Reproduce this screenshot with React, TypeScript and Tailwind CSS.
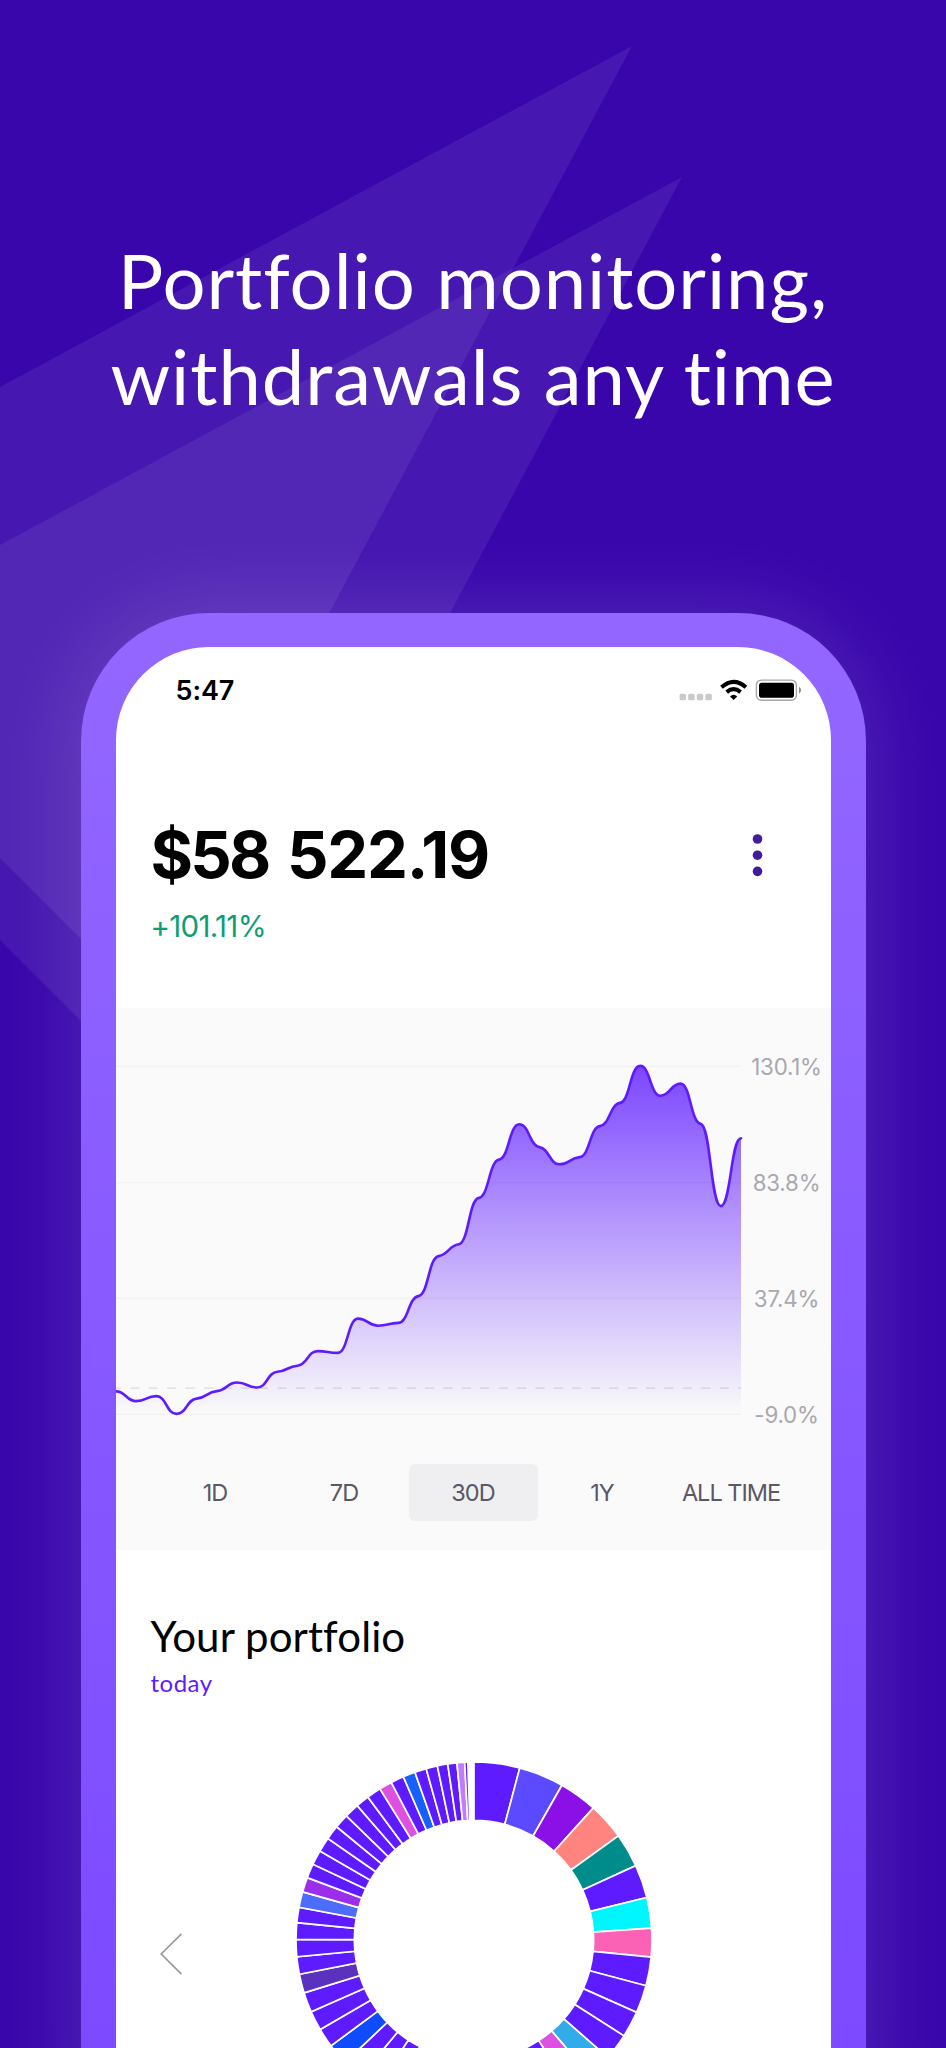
import clsx from "clsx";

const STEP = 625 / 31;
const values = [
  383.4, 393.1, 388.1, 405.9, 390.6, 383.1, 374.5, 379.5, 363.8, 357.7, 343.1, 344.9, 310.6, 317.7, 314.9, 288.1,
  248.1, 236.3, 189.9, 151.6, 116.3, 139.1, 156.3, 149.1, 118.1, 94.9, 57.9, 87.7, 75.6, 115.9, 198.1, 130.2,
];

// control points lie almost level with the day's value, so every day gets a short plateau
const linePath = () => {
  const slope = (i: number) => {
    if (i === 0 || i === values.length - 1) return 0;
    const a = values[i] - values[i - 1];
    const b = values[i + 1] - values[i];
    return a * b > 0 ? Math.sign(a) * Math.min(Math.abs(a), Math.abs(b), 12) * 0.12 : 0;
  };
  let d = `M0 ${values[0]}`;
  for (let i = 1; i < values.length; i++) {
    const x0 = (i - 1) * STEP;
    const x1 = i * STEP;
    d += ` C${x0 + STEP * 0.5} ${values[i - 1] + slope(i - 1)} ${x1 - STEP * 0.5} ${values[i] - slope(i)} ${x1} ${values[i]}`;
  }
  return d;
};

const labels = ["130.1%", "83.8%", "37.4%", "-9.0%"];
const ranges = ["1D", "7D", "30D", "1Y", "ALL TIME"];

const MAIN = "#5e1bff";

// [end angle in degrees clockwise from the top, colour]
const slices: [number, string][] = [
  [14.9, MAIN], [29.6, "#5b4aff"], [42.1, "#8b10e8"], [54.2, "#ff8480"], [65.3, "#008c8a"], [76.2, MAIN],
  [86.2, "#00f6ff"], [95.5, "#fb62b5"], [104.9, MAIN], [114, MAIN], [122.6, MAIN], [131.3, MAIN],
  [139.5, "#32ace8"], [147.3, "#dc50e2"], [155, MAIN], [162.5, MAIN], [170, MAIN], [177.5, MAIN],
  [185, MAIN], [192.5, MAIN], [200, MAIN], [207, MAIN], [213.3, MAIN], [219.7, MAIN], [226.5, MAIN],
  [233.5, "#0f4cff"], [239.8, MAIN], [246.2, MAIN], [252.7, MAIN], [258.9, "#5b32bf"], [264.6, MAIN],
  [270.2, MAIN], [275.6, MAIN], [280.6, MAIN], [285.7, "#4d6cf9"], [290.5, "#9b2eea"], [295.2, MAIN],
  [300, MAIN], [304.8, MAIN], [309.5, MAIN], [314.2, MAIN], [319, MAIN], [323.4, MAIN], [328.1, MAIN],
  [332.3, "#dc50e2"], [336.6, MAIN], [340.6, "#1760ff"], [344.4, MAIN], [348.1, MAIN], [351.5, MAIN],
  [354.5, MAIN], [357, "#c07cff"], [358, MAIN],
];

const slicePath = (from: number, to: number) => {
  const R = 178;
  const r = 119.6;
  const point = (deg: number, radius: number) => {
    const a = (deg * Math.PI) / 180;
    return `${178 + radius * Math.sin(a)} ${178 - radius * Math.cos(a)}`;
  };
  return `M${point(from, R)} A${R} ${R} 0 0 1 ${point(to, R)} L${point(to, r)} A${r} ${r} 0 0 0 ${point(from, r)} Z`;
};

const Backdrop = () => (
  <svg className="absolute left-0 top-0" width="946" height="1140" viewBox="0 0 946 1140" fill="#fff" fillOpacity="0.07">
    <path d="M632 46 L0 387 V858 L132 990 L330 611.5 Z" />
    <path d="M682 177 L0 545 V940 L180 1120 L451 611.5 Z" />
  </svg>
);

const StatusBar = () => (
  <div className="flex h-[86px] items-center justify-between pl-[60px] pr-[30px]">
    <p className="mt-0.5 font-[Inter,sans-serif] text-[27px] font-semibold leading-8 tracking-[-0.1px]">5:47</p>
    <svg className="-mt-px" width="123" height="24" viewBox="678 677.5 123 24">
      {[679.6, 688.2, 696.8, 705.4].map((x) => (
        <rect key={x} x={x} y="693.3" width="6.4" height="6.4" rx="1.5" fill="#cacaca" />
      ))}
      <g fill="none" stroke="#000" strokeWidth="4.1">
        <path d="M721.5 686.7 Q733.6 675.9 745.9 686.7" />
        <path d="M726.7 691.6 Q733.6 685.8 740.6 691.6" />
      </g>
      <path d="M733.6 699.6 L730 696 Q733.6 692.6 737.2 696 Z" />
      <rect x="756.4" y="679.6" width="40" height="20.2" rx="5" fill="none" stroke="#a6a6a6" strokeWidth="1.4" />
      <rect x="759" y="682.2" width="35" height="15" rx="2.8" />
      <path d="M799 686.5 Q801.2 687.6 801 689.8 Q801 692.4 799 693.3 Z" fill="#8f8f8f" />
    </svg>
  </div>
);

const Balance = () => (
  <div className="flex h-[275px] items-start justify-between pl-[35px] pr-[68px] pt-[82px] font-[Inter,sans-serif]">
    <div>
      <p className="text-[65px] font-bold leading-[80px] tracking-[-1.3px]">
        <span className="tracking-[-2.8px] [word-spacing:6px]">$58 </span>522.19
      </p>
      <p className="mt-[13px] text-[29.5px] leading-9 tracking-[-0.7px] text-[#0f9d75]">+101.11%</p>
    </div>
    <svg className="mt-[19px]" width="11" height="44" viewBox="0 0 11 44" fill="#451b9b">
      <circle cx="5.5" cy="5" r="4.8" />
      <circle cx="5.5" cy="21.2" r="4.8" />
      <circle cx="5.5" cy="37.4" r="4.8" />
    </svg>
  </div>
);

const Chart = () => {
  const line = linePath();
  return (
    <div className="h-[541.5px] bg-[#fafafa] font-[Inter,sans-serif]">
      <div className="flex h-[455.5px]">
        <svg className="shrink-0 overflow-visible" width="625" height="420" viewBox="0 0 625 420">
          <defs>
            <linearGradient id="area" gradientUnits="userSpaceOnUse" x1="0" y1="57" x2="0" y2="406">
              <stop offset="0" stopColor="#7c46ff" />
              <stop offset="1" stopColor="#7c46ff" stopOpacity="0" />
            </linearGradient>
          </defs>
          <path d={`${line} V406.3 H0 Z`} fill="url(#area)" />
          {[58.4, 174.6, 290.4, 406.3].map((y) => (
            <path key={y} d={`M0 ${y} H625`} stroke="#000" strokeOpacity="0.035" strokeWidth="1.4" />
          ))}
          <path d="M-4.2 380.2 H625" stroke="#000" strokeOpacity="0.12" strokeWidth="1.3" strokeDasharray="9.2 9.22" />
          <path d={line} fill="none" stroke={MAIN} strokeWidth="2.6" strokeLinecap="round" />
        </svg>
        <div className="flex w-[90px] flex-col items-center gap-[86px] pl-0.5 pt-[43.5px] text-[22.3px] leading-[30px] tracking-[-0.2px] text-[#a9a7b0]">
          {labels.map((l) => (
            <span key={l}>{l}</span>
          ))}
        </div>
      </div>
      <div className="flex px-[35px]">
        {ranges.map((r) => (
          <button
            key={r}
            className={clsx(
              "h-[57.5px] w-[129px] whitespace-nowrap rounded-md text-[23.5px] tracking-[-1px] text-[#5a5766]",
              r === "30D" && "bg-[#efeff1]"
            )}
          >
            {r}
          </button>
        ))}
      </div>
    </div>
  );
};

const Portfolio = () => (
  <div className="pt-[61px] font-[Lato,sans-serif]">
    <h2 className="pl-[35px] text-[42px] leading-[50px] tracking-[0.1px]">Your portfolio</h2>
    <p className="mt-[7px] pl-[35px] text-[24px] leading-[30px] tracking-[0.5px] text-[#5e1bff]">today</p>
    <div className="flex pl-11 pt-16">
      <svg className="mt-[171px] shrink-0" width="22" height="43" viewBox="0 0 22 43">
        <path d="M21.4 0.8 L1.2 21 L21.4 41.2" fill="none" stroke="#999" strokeWidth="1.7" />
      </svg>
      <svg className="ml-[114px] shrink-0" width="356" height="356" viewBox="0 0 356 356">
        {slices.map(([end, color], i) => (
          <path
            key={end}
            d={slicePath(i ? slices[i - 1][0] : 0, end)}
            fill={color}
            stroke="#fff"
            strokeWidth="1.7"
          />
        ))}
      </svg>
    </div>
  </div>
);

export default function App() {
  return (
    <div className="relative flex h-[2048px] w-[946px] flex-col items-center overflow-hidden bg-[#3906ac] text-black">
      <Backdrop />
      <h1 className="relative pt-[232px] text-center font-[Lato,sans-serif] text-[76px] leading-[95.5px] tracking-[0.95px] text-white">
        <span className="block">Portfolio monitoring,</span>
        <span className="block">withdrawals any time</span>
      </h1>
      <div className="relative mt-[189.5px] h-[1500px] w-[785px] shrink-0 rounded-t-[128px] bg-linear-to-b from-[#9367ff] to-[#7c48ff] px-[35px] pt-[34.5px] shadow-[0_0_88px_rgba(255,255,255,0.15)]">
        <div className="h-full overflow-hidden rounded-t-[93px] bg-white">
          <StatusBar />
          <Balance />
          <Chart />
          <Portfolio />
        </div>
      </div>
    </div>
  );
}
